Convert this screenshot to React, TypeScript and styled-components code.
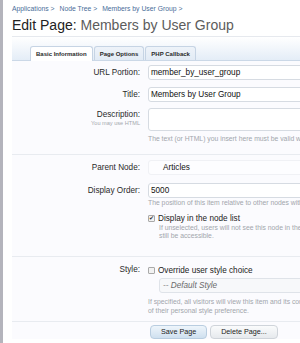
import styled, { createGlobalStyle } from "styled-components";

const Global = createGlobalStyle`
  html, body {
    margin: 0;
    padding: 0;
    background: #ffffff;
    overflow: hidden;
  }
  body {
    font-family: "Liberation Sans", Arial, sans-serif;
    font-size: 8px;
    color: #000;
  }
`;

const Shell = styled.div`
  width: 300px;
  height: 343px;
  border-left: 3px solid #b4b4bc;
  box-sizing: border-box;
  overflow: hidden;
`;

const Main = styled.div`
  padding: 4px 0 0 9px;
  width: 420px;
`;

const Crumbs = styled.div`
  display: flex;
  gap: 5px;
  font-size: 6.8px;
  color: #4a6e99;
  height: 10px;
  line-height: 10px;
`;

const Title = styled.h1`
  margin: 2px 0 0;
  font-size: 14px;
  font-weight: normal;
  color: #222;
  line-height: 18px;
  padding-bottom: 2px;
  border-bottom: 1px solid #e6e9ee;

  span {
    color: #5c5c5c;
  }
`;

const TabBar = styled.div`
  height: 23px;
  background: linear-gradient(#ffffff, #e4edf7);
  border-bottom: 1px solid #cbd8e7;
  display: flex;
  align-items: flex-end;
  padding-left: 18px;
  gap: 1px;
  box-sizing: content-box;
`;

const Tab = styled.div<{ $active?: boolean }>`
  height: ${(p) => (p.$active ? "14px" : "13px")};
  line-height: 14px;
  padding: 0 5px;
  font-size: 6px;
  font-weight: bold;
  color: #2a2a2a;
  border: 1px solid #c6d4e4;
  border-bottom: none;
  border-radius: 3px 3px 0 0;
  background: ${(p) => (p.$active ? "#ffffff" : "linear-gradient(#eef3f9, #e2ebf5)")};
  margin-bottom: ${(p) => (p.$active ? "-1px" : "0")};
`;

const Panel = styled.div`
  background: #fbfbfe;
  padding-top: 4px;
`;

const Row = styled.div<{ $top?: number }>`
  display: grid;
  grid-template-columns: 128px 1fr;
  column-gap: 8px;
  align-items: start;
  margin-top: ${(p) => p.$top ?? 0}px;
`;

const Label = styled.div<{ $h?: number }>`
  text-align: right;
  font-size: 8.2px;
  color: #2a2a2a;
  line-height: ${(p) => p.$h ?? 15}px;

  small {
    display: block;
    font-size: 5.6px;
    line-height: 8px;
    margin-top: -2px;
    color: #a4a8ae;
  }
`;

const Field = styled.div`
  display: flex;
  flex-direction: column;
  align-items: flex-start;
`;

const Input = styled.div<{ $h?: number }>`
  box-sizing: border-box;
  height: ${(p) => p.$h ?? 15}px;
  line-height: 13px;
  border: 1px solid #d6dbe2;
  border-radius: 3px;
  background: #fff;
  padding: 0 2px;
  font-size: 8.2px;
  color: #111;
  width: 240px;
`;

const Select = styled.div<{ $boxed?: boolean }>`
  box-sizing: border-box;
  height: 15px;
  line-height: 13px;
  border: 1px solid ${(p) => (p.$boxed ? "#dfe3e9" : "#f0f1f5")};
  border-radius: 3px;
  background: ${(p) => (p.$boxed ? "#f7f8fa" : "#fdfdff")};
  font-size: 8.2px;
  font-style: ${(p) => (p.$boxed ? "italic" : "normal")};
  color: ${(p) => (p.$boxed ? "#6a6a6a" : "#111")};
  width: 240px;
  margin-left: ${(p) => (p.$boxed ? "11px" : "0")};
  padding-left: ${(p) => (p.$boxed ? "3px" : "14px")};
  margin-top: ${(p) => (p.$boxed ? "2px" : "0")};
`;

const Hint = styled.div<{ $indent?: boolean; $top?: number; $lh?: number }>`
  font-size: 6.8px;
  color: #a2a6ac;
  line-height: ${(p) => p.$lh ?? 9}px;
  margin-top: ${(p) => p.$top ?? 0}px;
  padding-left: ${(p) => (p.$indent ? "11px" : "0")};
  white-space: nowrap;
`;

const Check = styled.div<{ $top?: number }>`
  display: flex;
  align-items: center;
  gap: 3px;
  font-size: 8.2px;
  color: #222;
  height: 12px;
  margin-top: ${(p) => p.$top ?? 0}px;
`;

const Box = styled.span`
  box-sizing: border-box;
  width: 7px;
  height: 7px;
  border: 1px solid #a9a9a9;
  border-radius: 1px;
  background: #f2f2f2;
  font-size: 6px;
  line-height: 5px;
  color: #333;
  text-align: center;
`;

const Sep = styled.div<{ $top: number }>`
  border-top: 1px solid #e8ebf0;
  margin-top: ${(p) => p.$top}px;
`;

const Buttons = styled.div`
  display: flex;
  gap: 3px;
  padding-left: 138px;
  margin-top: 3px;
`;

const Button = styled.div<{ $primary?: boolean }>`
  height: 12px;
  line-height: 11px;
  padding: 0 10px;
  font-size: 7.2px;
  color: #222;
  border: 1px solid ${(p) => (p.$primary ? "#b9cde0" : "#cfd4da")};
  border-radius: 4px;
  background: ${(p) =>
    p.$primary
      ? "linear-gradient(#eef5fb, #cfe0ef)"
      : "linear-gradient(#fafbfc, #e6e9ed)"};
`;

function App() {
  return (
    <>
      <Global />
      <Shell>
        <Main>
          <Crumbs>
            <span>Applications &gt;</span>
            <span>Node Tree &gt;</span>
            <span>Members by User Group &gt;</span>
          </Crumbs>
          <Title>
            Edit Page: <span>Members by User Group</span>
          </Title>
          <TabBar>
            <Tab $active>Basic Information</Tab>
            <Tab>Page Options</Tab>
            <Tab>PHP Callback</Tab>
          </TabBar>
          <Panel>
            <Row>
              <Label>URL Portion:</Label>
              <Field>
                <Input>member_by_user_group</Input>
              </Field>
            </Row>
            <Row $top={7}>
              <Label>Title:</Label>
              <Field>
                <Input>Members by User Group</Input>
              </Field>
            </Row>
            <Row $top={6}>
              <Label $h={13}>
                Description:
                <small>You may use HTML</small>
              </Label>
              <Field>
                <Input $h={23} />
                <Hint $top={3}>
                  The text (or HTML) you insert here must be valid with
                </Hint>
              </Field>
            </Row>
            <Sep $top={11} />
            <Row $top={5}>
              <Label>Parent Node:</Label>
              <Field>
                <Select>Articles</Select>
              </Field>
            </Row>
            <Row $top={8}>
              <Label>Display Order:</Label>
              <Field>
                <Input>5000</Input>
                <Hint>
                  The position of this item relative to other nodes with
                </Hint>
                <Check $top={5}>
                  <Box>✔</Box>
                  Display in the node list
                </Check>
                <Hint $indent $lh={8}>
                  If unselected, users will not see this node in the
                  <br />
                  still be accessible.
                </Hint>
              </Field>
            </Row>
            <Sep $top={16} />
            <Row $top={7}>
              <Label $h={12}>Style:</Label>
              <Field>
                <Check>
                  <Box />
                  Override user style choice
                </Check>
                <Select $boxed>-- Default Style</Select>
                <Hint $top={4}>
                  If specified, all visitors will view this item and its con
                  <br />
                  of their personal style preference.
                </Hint>
              </Field>
            </Row>
            <Sep $top={6} />
            <Buttons>
              <Button $primary>Save Page</Button>
              <Button>Delete Page...</Button>
            </Buttons>
          </Panel>
        </Main>
      </Shell>
    </>
  );
}

export default App;
